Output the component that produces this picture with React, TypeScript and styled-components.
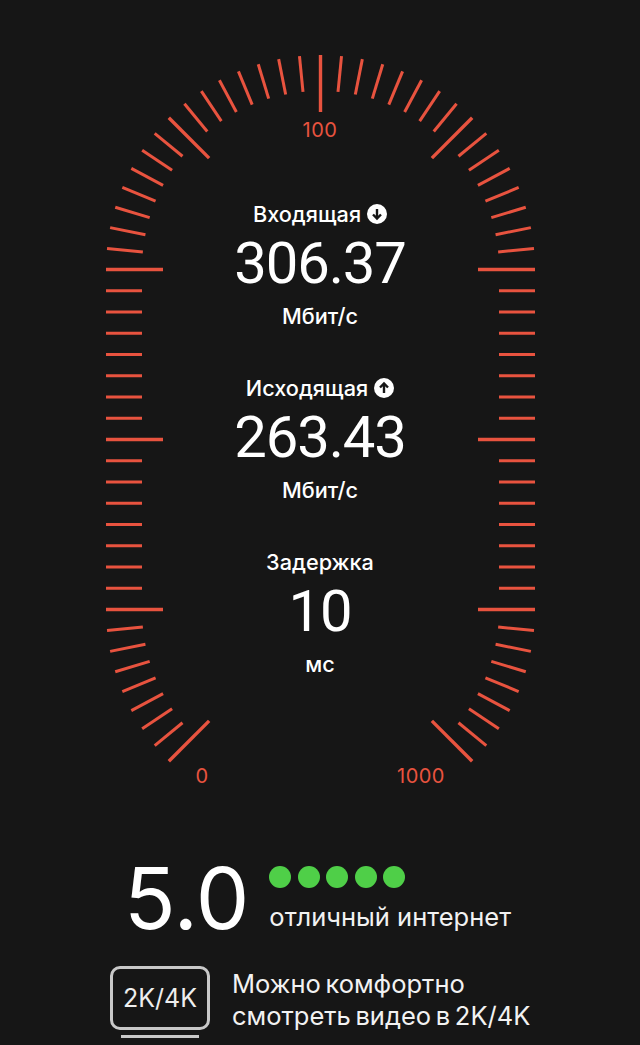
import React from "react";
import styled, { createGlobalStyle } from "styled-components";

const Global = createGlobalStyle`
  html, body { margin: 0; padding: 0; background: #161616; }
  body { width: 640px; height: 1045px; overflow: hidden; font-family: Inter, "Noto Sans", "Liberation Sans", sans-serif; }
`;

const Page = styled.div`
  width: 640px;
  height: 1045px;
  background: #161616;
  color: #fff;
  display: flex;
  flex-direction: column;
  overflow: hidden;
`;

const Gauge = styled.section`
  position: relative;
  height: 857px;
  flex: none;
  display: flex;
  flex-direction: column;
  align-items: center;
  padding-top: 200px;
  box-sizing: border-box;
`;

const Dial = styled.svg`
  position: absolute;
  left: 0;
  top: 0;
`;

const ScaleLabel = styled.span<{ $x: number; $y: number }>`
  position: absolute;
  left: ${(p) => p.$x}px;
  top: ${(p) => p.$y}px;
  transform: translate(-50%, -50%);
  color: #e8533f;
  font-size: 20px;
  letter-spacing: 0.5px;
  line-height: 20px;
`;

const Stat = styled.div`
  height: 174px;
  display: flex;
  flex-direction: column;
  align-items: center;
`;

const StatLabel = styled.div`
  display: flex;
  align-items: center;
  gap: 6px;
  height: 28px;
  font-size: 21.7px;
  font-weight: 500;
  line-height: 28px;
`;

const StatValue = styled.div`
  font-family: Roboto, sans-serif;
  font-size: 58px;
  letter-spacing: -1.1px;
  line-height: 70px;
  height: 70px;
`;

const StatUnit = styled.div`
  font-size: 21.7px;
  font-weight: 500;
  line-height: 28px;
  margin-top: 4px;
`;

const Summary = styled.section`
  display: flex;
  padding-left: 124px;
  height: 100px;
  box-sizing: border-box;
  gap: 20px;
`;

const Score = styled.div`
  font-size: 85px;
  line-height: 84px;
`;

const Verdict = styled.div`
  display: flex;
  flex-direction: column;
  padding-top: 9px;
`;

const Dots = styled.div`
  display: flex;
  gap: 6.5px;
`;

const Dot = styled.span`
  width: 22px;
  height: 22px;
  border-radius: 50%;
  background: #4fcf48;
`;

const VerdictText = styled.div`
  font-size: 25.5px;
  line-height: 32px;
  margin-top: 13px;
  color: #f2f2f2;
`;

const Advice = styled.section`
  display: flex;
  padding-left: 110px;
  gap: 22px;
  margin-top: 9px;
`;

const Screen = styled.div`
  display: flex;
  flex-direction: column;
  align-items: center;
  gap: 5px;
`;

const ScreenBox = styled.div`
  width: 100px;
  height: 64px;
  box-sizing: border-box;
  border: 3px solid #c8c8c8;
  border-radius: 10px;
  display: flex;
  align-items: center;
  justify-content: center;
  font-size: 25px;
  color: #eee;
`;

const ScreenStand = styled.div`
  width: 78px;
  height: 3px;
  background: #c8c8c8;
`;

const AdviceText = styled.div`
  font-size: 25.5px;
  word-spacing: -2.5px;
  line-height: 32px;
  color: #f2f2f2;
  margin-top: 2px;
`;

const Arrow = ({ up }: { up?: boolean }) => (
  <svg width="20" height="20" viewBox="0 0 20 20">
    <circle cx="10" cy="10" r="10" fill="#fff" />
    <path
      d={up ? "M10 15V6M6 9.5 10 5.5 14 9.5" : "M10 5v9M6 10.5 10 14.5 14 10.5"}
      fill="none"
      stroke="#161616"
      strokeWidth="2.4"
    />
  </svg>
);

const RED = "#e8533f";
type Tick = { x1: number; y1: number; x2: number; y2: number; major: boolean };

const radial = (cx: number, cy: number, deg: number, major: boolean): Tick => {
  const a = (deg * Math.PI) / 180;
  const ux = Math.cos(a);
  const uy = Math.sin(a);
  const inner = major ? 157.5 : 178.5;
  return { x1: cx + ux * 214.5, y1: cy + uy * 214.5, x2: cx + ux * inner, y2: cy + uy * inner, major };
};

const buildTicks = (): Tick[] => {
  const out: Tick[] = [];
  for (let i = 0; i <= 32; i++) {
    out.push(radial(320.5, 269.5, 180 + i * 5.625, i % 8 === 0));
  }
  for (let i = 1; i <= 16; i++) {
    const y = 269.5 + i * 21.25;
    const major = i % 8 === 0;
    const len = major ? 57 : 36;
    out.push({ x1: 106, y1: y, x2: 106 + len, y2: y, major });
    out.push({ x1: 535, y1: y, x2: 535 - len, y2: y, major });
  }
  for (let i = 1; i <= 8; i++) {
    out.push(radial(320.5, 609.5, 180 - i * 5.625, i === 8));
    out.push(radial(320.5, 609.5, i * 5.625, i === 8));
  }
  return out;
};

const ticks = buildTicks();

export default function App() {
  return (
    <Page>
      <Global />
      <Gauge>
        <Dial width="640" height="857" viewBox="0 0 640 857">
          {ticks.map((t, i) => (
            <line key={i} x1={t.x1} y1={t.y1} x2={t.x2} y2={t.y2} stroke={RED} strokeWidth={t.major ? 3.4 : 3} />
          ))}
        </Dial>
        <ScaleLabel $x={320} $y={130}>100</ScaleLabel>
        <ScaleLabel $x={202} $y={776}>0</ScaleLabel>
        <ScaleLabel $x={421} $y={776}>1000</ScaleLabel>
        <Stat>
          <StatLabel>Входящая <Arrow /></StatLabel>
          <StatValue>306.37</StatValue>
          <StatUnit>Мбит/с</StatUnit>
        </Stat>
        <Stat>
          <StatLabel>Исходящая <Arrow up /></StatLabel>
          <StatValue>263.43</StatValue>
          <StatUnit>Мбит/с</StatUnit>
        </Stat>
        <Stat>
          <StatLabel>Задержка</StatLabel>
          <StatValue>10</StatValue>
          <StatUnit>мс</StatUnit>
        </Stat>
      </Gauge>
      <Summary>
        <Score>5.0</Score>
        <Verdict>
          <Dots><Dot /><Dot /><Dot /><Dot /><Dot /></Dots>
          <VerdictText>отличный интернет</VerdictText>
        </Verdict>
      </Summary>
      <Advice>
        <Screen>
          <ScreenBox>2K/4K</ScreenBox>
          <ScreenStand />
        </Screen>
        <AdviceText>Можно комфортно<br />смотреть видео в 2K/4K</AdviceText>
      </Advice>
    </Page>
  );
}
